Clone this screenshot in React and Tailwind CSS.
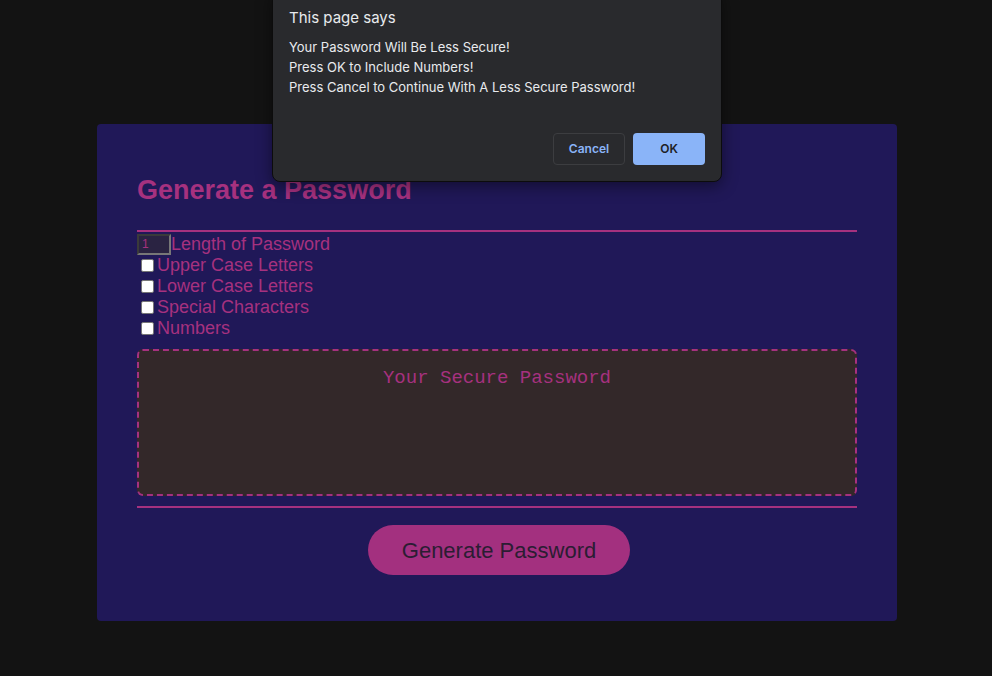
import React from 'react';

export default function App() {
  const options = ['Upper Case Letters', 'Lower Case Letters', 'Special Characters', 'Numbers'];

  return (
    <div className="relative min-h-[676px] w-full bg-[#131313] pt-[124px] font-['Liberation_Sans',Arial,sans-serif]">
      {/* Card */}
      <div className="ml-[97px] w-[800px] rounded-[4px] bg-[#201858] px-10 pt-[51px] pb-[46px]">
        <h2 className="text-[27px] font-bold leading-[30px] text-[#a6317f]">Generate a Password</h2>
        <div className="mt-[25px] h-[2px] bg-[#a6317f]" />

        <div className="mt-[2px] flex items-center text-[18px] leading-[21px] text-[#a6317f]">
          <div className="h-[21px] w-[34px] border-2 border-t-[#3a3a3a] border-l-[#3a3a3a] border-r-[#777] border-b-[#777] bg-[#2a2342] pl-[3px] text-[12px] leading-[17px] text-[#a6317f]">
            1
          </div>
          <span>Length of Password</span>
        </div>

        {options.map((label) => (
          <label key={label} className="flex items-center text-[18px] leading-[21px] text-[#a6317f]">
            <span className="ml-[4px] mr-[3px] inline-block h-[13px] w-[13px] rounded-[2px] border border-[#767676] bg-white" />
            <span>{label}</span>
          </label>
        ))}

        <div className="mt-[10px] h-[147px] rounded-[6px] border-2 border-dashed border-[#a6317f] bg-[#332829] pt-[17px] text-center font-['Liberation_Mono','Courier_New',monospace] text-[19px] leading-[21px] text-[#a6317f]">
          Your Secure Password
        </div>

        <div className="mt-[10px] h-[2px] bg-[#a6317f]" />

        <div className="mt-[17px] flex justify-center pl-[4px]">
          <button className="h-[50px] w-[262px] rounded-full bg-[#a3307f] text-[22px] text-[#2b1d33]">
            Generate Password
          </button>
        </div>
      </div>

      {/* Alert dialog */}
      <div className="absolute left-[272px] top-[-8px] w-[450px] rounded-b-[8px] border border-[#0c0c0c] bg-[#292a2d] px-4 pt-[16px] pb-4 font-['Inter',sans-serif] text-white shadow-[0_4px_16px_rgba(0,0,0,0.45)]">
        <div className="text-[15px] leading-[18px] text-[#e8eaed]">This page says</div>
        <div className="mt-[10px] text-[13px] leading-[20px] text-[#e8eaed]">
          <div>Your Password Will Be Less Secure!</div>
          <div>Press OK to Include Numbers!</div>
          <div>Press Cancel to Continue With A Less Secure Password!</div>
        </div>
        <div className="mt-[36px] flex justify-end gap-2">
          <button className="h-[32px] w-[72px] rounded-[4px] border border-[#3c3d40] text-[12px] font-semibold text-[#8ab4f8]">
            Cancel
          </button>
          <button className="h-[32px] w-[72px] rounded-[4px] bg-[#8ab4f8] text-[12px] font-semibold text-[#202124]">
            OK
          </button>
        </div>
      </div>
    </div>
  );
}
